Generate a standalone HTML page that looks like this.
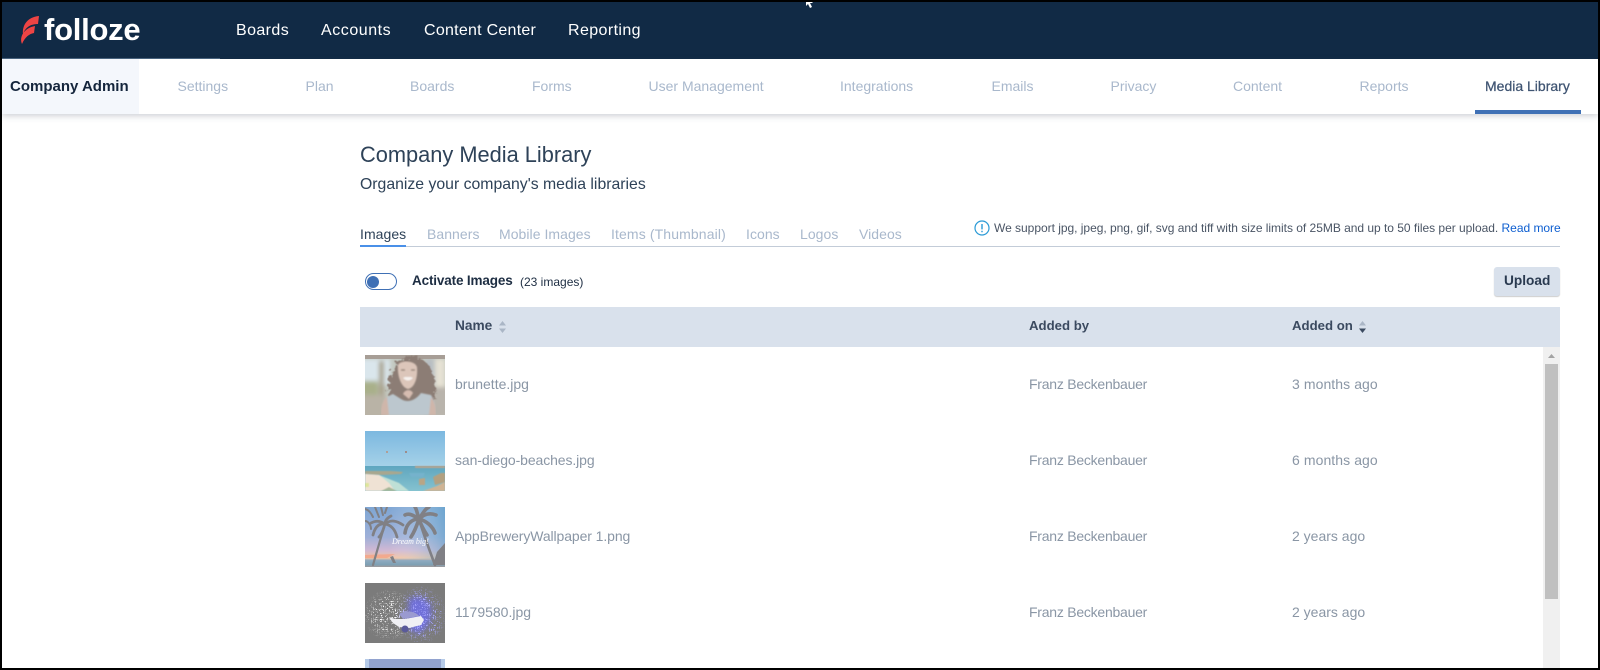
<!DOCTYPE html>
<html><head><meta charset="utf-8"><title>Company Media Library</title>
<style>
html,body{margin:0;padding:0;background:#fff}
body{width:1600px;height:670px;overflow:hidden;position:relative;font-family:"Liberation Sans",sans-serif}
.t{position:absolute;white-space:nowrap;line-height:20px;height:20px}
.bx{position:absolute}
.nav{color:#fff;font-size:16px;top:21px;letter-spacing:.4px}
.tab{color:#a9b8cc;font-size:14px;top:76px}
.sub{color:#a9b8cc;font-size:14px;top:224px;letter-spacing:.05px}
.th{color:#3b4a60;font-size:13.2px;font-weight:bold;top:316px}
.c{color:#8a96a5;font-size:14px}
.f{letter-spacing:-.1px}.b{letter-spacing:-.24px}.d{letter-spacing:.08px}
svg{position:absolute;display:block}
</style></head><body>
<div class="bx" style="left:2px;top:2px;width:1596px;height:57px;background:#112a45"></div>
<div class="bx" style="left:2px;top:58px;width:218px;height:1px;background:#4a6580"></div>
<svg style="left:18px;top:14px" width="24" height="32" viewBox="0 0 24 32"><path d="M21 2 L20 10 C14 10 8 12 5 20 C4 12 9 3 21 2Z M17 12 L16 19 C11 20 7 23 4 30 C1 23 6 14 17 12Z" fill="#ee4444"/></svg>
<div class="t" style="left:44px;top:10px;height:40px;line-height:40px;font-size:31px;font-weight:bold;color:#fff;letter-spacing:-.25px">folloze</div>
<div class="t nav" style="left:236px">Boards</div>
<div class="t nav" style="left:321px;letter-spacing:.55px">Accounts</div>
<div class="t nav" style="left:424px;letter-spacing:.26px">Content Center</div>
<div class="t nav" style="left:568px">Reporting</div>
<svg style="left:805px;top:0" width="12" height="10" viewBox="0 0 12 10"><path d="M1 0 L1 6 L3 4 L5 8 L7 7 L5 3 L8 3 L5 0Z" fill="#fff"/></svg>

<div class="bx" style="left:2px;top:59px;width:1596px;height:55px;background:#fff;box-shadow:0 2px 6px rgba(60,70,90,.25)"></div>
<div class="bx" style="left:2px;top:59px;width:137px;height:55px;background:#f4f7fc"></div>
<div class="t" style="left:10px;top:77px;font-size:15px;font-weight:bold;color:#14253c">Company Admin</div>
<div class="t tab" style="left:177.5px">Settings</div>
<div class="t tab" style="left:305.5px">Plan</div>
<div class="t tab" style="left:410px">Boards</div>
<div class="t tab" style="left:532px">Forms</div>
<div class="t tab" style="left:648.5px">User Management</div>
<div class="t tab" style="left:840px">Integrations</div>
<div class="t tab" style="left:991.5px">Emails</div>
<div class="t tab" style="left:1110.5px">Privacy</div>
<div class="t tab" style="left:1233px">Content</div>
<div class="t tab" style="left:1359.5px">Reports</div>
<div class="t tab" style="left:1485px;color:#3f5472;-webkit-text-stroke:.25px #3f5472">Media Library</div>
<div class="bx" style="left:1475px;top:110px;width:106px;height:4px;background:#3f70b5"></div>

<div class="t" style="left:360px;top:143px;height:24px;line-height:24px;font-size:21.8px;color:#2e4258">Company Media Library</div>
<div class="t" style="left:360px;top:175px;font-size:15.8px;color:#2e4258">Organize your company's media libraries</div>

<div class="t sub" style="left:360px;color:#2e4258">Images</div>
<div class="t sub" style="left:427px">Banners</div>
<div class="t sub" style="left:499px">Mobile Images</div>
<div class="t sub" style="left:611px;letter-spacing:.12px">Items (Thumbnail)</div>
<div class="t sub" style="left:746px">Icons</div>
<div class="t sub" style="left:800px">Logos</div>
<div class="t sub" style="left:859px">Videos</div>
<div class="bx" style="left:360px;top:246px;width:1200px;height:1px;background:#c3ccd8"></div>
<div class="bx" style="left:360px;top:245px;width:46px;height:2px;background:#4a90e8"></div>

<svg style="left:974px;top:220px" width="16" height="16" viewBox="0 0 16 16"><circle cx="8" cy="8" r="7" fill="none" stroke="#2a9ad6" stroke-width="1.2"/><path d="M8 4V9.4M8 10.8V12.2" stroke="#2a9ad6" stroke-width="1.4"/></svg>
<div class="t" style="left:994px;top:218px;font-size:12px;color:#4a5565;letter-spacing:-.023px">We support jpg, jpeg, png, gif, svg and tiff with size limits of 25MB and up to 50 files per upload. <span style="color:#0d5ed0">Read more</span></div>

<div class="bx" style="left:365px;top:273px;width:30px;height:15px;border:1.5px solid #3f70b5;border-radius:9px"></div>
<div class="bx" style="left:367px;top:276px;width:12px;height:12px;border-radius:50%;background:#3f70b5"></div>
<div class="t" style="left:412px;top:271px;font-size:13.5px;letter-spacing:-.15px;font-weight:bold;color:#1d2d42">Activate Images</div>
<div class="t" style="left:520px;top:272px;font-size:12px;color:#1d2d42">(23 images)</div>
<div class="bx" style="left:1494px;top:267px;width:66px;height:29px;background:#d9e1ec;border-radius:3px;box-shadow:0 1px 1px rgba(0,0,0,.2)"></div>
<div class="t" style="left:1504px;top:271px;font-size:13.7px;font-weight:bold;color:#2a3a50">Upload</div>

<div class="bx" style="left:360px;top:307px;width:1200px;height:40px;background:#d9e1ec"></div>
<div class="t th" style="left:455px;font-size:13.7px">Name</div>
<svg style="left:498px;top:321px" width="9" height="12" viewBox="0 0 9 12"><path d="M4.5 0L8 4.5H1ZM4.5 12L1 7.5H8Z" fill="#aab6c6"/></svg>
<div class="t th" style="left:1029px">Added by</div>
<div class="t th" style="left:1292px">Added on</div>
<svg style="left:1358px;top:321px" width="9" height="12" viewBox="0 0 9 12"><path d="M4.5 0L8 4.5H1Z" fill="#aab6c6"/><path d="M4.5 12L1 7.5H8Z" fill="#3b4a60"/></svg>

<!-- thumb 1 -->
<svg style="left:365px;top:355px" width="80" height="60" viewBox="0 0 80 60">
<defs><filter id="b1" x="-20%" y="-20%" width="140%" height="140%"><feGaussianBlur stdDeviation="2.2"/></filter>
<filter id="c1" x="-20%" y="-20%" width="140%" height="140%"><feTurbulence baseFrequency=".18" numOctaves="2" seed="7" result="n"/><feDisplacementMap in="SourceGraphic" in2="n" scale="9"/><feGaussianBlur stdDeviation=".5"/></filter>
<filter id="s1" x="0" y="0" width="100%" height="100%"><feGaussianBlur stdDeviation=".8"/></filter></defs>
<rect width="80" height="60" fill="#c3c8c0"/>
<g filter="url(#b1)"><rect x="-5" y="4" width="30" height="26" fill="#dae6ec"/><rect x="14" y="6" width="5" height="40" fill="#a8a08a"/><rect x="-5" y="26" width="18" height="14" fill="#a9b08a"/><rect x="-5" y="40" width="26" height="25" fill="#b9b3a6"/><rect x="60" y="4" width="12" height="26" fill="#b8bec2"/><rect x="70" y="4" width="10" height="30" fill="#e6e2d4"/><rect x="60" y="32" width="24" height="30" fill="#b9b4ac"/></g>
<rect width="80" height="4" fill="#a79e96"/>
<path d="M22 32C22 10 32 0 45 0C60 0 68 14 67 28C70 38 66 50 60 56L50 52H34L24 50C26 42 20 40 22 32Z" fill="#8c7d74" filter="url(#c1)"/>
<g filter="url(#s1)">
<path d="M16 60C16 48 20 42 28 39L36 44C42 48 50 46 56 38L66 40C70 46 71 54 71 60Z" fill="#bcc7ce"/>
<path d="M16 60C16 50 18 45 22 42L24 60ZM71 60C71 52 69 46 66 42L64 60Z" fill="#cfb6aa"/>
<path d="M33 10C35 5 50 5 52 12C53 24 49 33 43 34C37 33 32 22 33 10Z" fill="#dcc6ba"/>
<path d="M38 39C40 34 46 34 48 38L44 44Z" fill="#d6bcb0"/>
<path d="M38 23Q43 28 48 23L46 22H40Z" fill="#f7f3f0"/>
<path d="M36 15h4M46 15h4" stroke="#8d7a70" stroke-width="1.2"/>
</g>
</svg>
<!-- thumb 2 -->
<svg style="left:365px;top:431px" width="80" height="60" viewBox="0 0 80 60">
<defs><linearGradient id="s2" x1="0" y1="0" x2="0" y2="1"><stop offset="0" stop-color="#7cb8e0"/><stop offset="1" stop-color="#a6d2e8"/></linearGradient>
<linearGradient id="w2" x1="0" y1="0" x2="0" y2="1"><stop offset="0" stop-color="#5fa6bf"/><stop offset="1" stop-color="#85c2cf"/></linearGradient>
<filter id="b2"><feGaussianBlur stdDeviation=".6"/></filter></defs>
<rect width="80" height="36" fill="url(#s2)"/>
<rect y="35" width="80" height="25" fill="url(#w2)"/>
<g filter="url(#b2)">
<path d="M50 35H80V37H50Z" fill="#b8a590"/>
<path d="M0 40H26L38 41L36 43L18 44L0 43Z" fill="#a8a78f"/>
<path d="M14 44L34 52L44 60H20Z" fill="#bfe0d6"/>
<path d="M0 43L14 44L24 52L30 60H0Z" fill="#efe2d4"/>
<path d="M54 48L60 47L60 54L54 54Z" fill="#b9a585"/>
<path d="M68 46L76 42H80V51L70 54Z" fill="#b3a080"/>
<path d="M58 60L72 55L80 51V60Z" fill="#d0b494"/>
<path d="M44 42H60L58 46H46Z" fill="#74b2cc"/>
<path d="M16 60L24 56L32 60Z" fill="#a6b798"/>
<path d="M0 52H4V56H0Z" fill="#dfe59a"/>
</g>
<circle cx="22" cy="21" r="1" fill="#b9927e"/><circle cx="41" cy="21" r="1" fill="#a07a6e"/>
</svg>
<!-- thumb 3 -->
<svg style="left:365px;top:507px" width="80" height="60" viewBox="0 0 80 60">
<defs><linearGradient id="s3" x1="0" y1="0" x2="0" y2="1"><stop offset="0" stop-color="#7ea6d4"/><stop offset=".5" stop-color="#9eb0d8"/><stop offset=".72" stop-color="#d0b8d4"/><stop offset=".85" stop-color="#f2c4a4"/><stop offset=".89" stop-color="#8eaac0"/><stop offset=".96" stop-color="#7da0b4"/><stop offset="1" stop-color="#a09a9c"/></linearGradient>
<linearGradient id="r3" x1="0" x2="1"><stop offset=".3" stop-color="#fff" stop-opacity="0"/><stop offset="1" stop-color="#5fa4cc" stop-opacity=".55"/></linearGradient></defs>
<rect width="80" height="60" fill="url(#s3)"/>
<rect width="80" height="52" fill="url(#r3)"/>
<path d="M0 48L30 47L22 51L0 51Z" fill="#f5a080" opacity=".7"/>
<g fill="none" stroke="#808085" stroke-linecap="round">
<path d="M8 58C12 44 16 30 20 17" stroke-width="2.2"/>
<path d="M70 58C64 42 58 26 54 12" stroke-width="2.6"/>
<g stroke-width="2.8">
<path d="M20 17C14 16 10 20 8 28"/><path d="M20 17C14 13 10 14 6 16"/><path d="M20 17C26 12 32 14 38 18"/><path d="M20 17C26 18 30 22 32 30"/><path d="M20 17C18 22 18 26 14 30"/><path d="M20 17C20 14 22 11 26 9"/>
</g>
<g stroke-width="3.6">
<path d="M54 12C46 12 41 18 40 26"/><path d="M54 12C48 8 44 6 40 8"/><path d="M54 12C60 6 66 6 71 8"/><path d="M54 12C62 14 68 20 70 26"/><path d="M54 12C52 18 50 24 46 30"/><path d="M54 12C56 18 58 22 62 28"/><path d="M54 12C52 6 52 3 50 0"/><path d="M54 12C58 6 60 2 64 0"/>
</g>
<g stroke-width="2"><path d="M0 2C4 3 6 6 8 10"/><path d="M0 14C3 14 6 18 6 22"/><path d="M10 0L14 10"/><path d="M16 0L18 8"/><path d="M22 0L20 6"/></g>
</g>
<path d="M72 45L80 36V58H68Z" fill="#808085"/>
<path d="M25 50L28 49L31 56L28 56Z" fill="#808085"/>
<text x="27" y="37" font-family="Liberation Serif,serif" font-style="italic" font-size="8" fill="#fff">Dream big!</text>
</svg>
<!-- thumb 4 -->
<svg style="left:365px;top:583px" width="80" height="60" viewBox="0 0 80 60">
<defs><filter id="b4" x="-20%" y="-20%" width="140%" height="140%"><feGaussianBlur stdDeviation="3"/></filter>
<filter id="n4" x="0" y="0" width="100%" height="100%"><feTurbulence baseFrequency=".5" numOctaves="2" seed="4" result="t"/><feColorMatrix in="t" values="0 0 0 0 1 0 0 0 0 1 0 0 0 0 1 4 4 0 0 -2.4" result="m"/><feComposite in="SourceGraphic" in2="m" operator="in"/></filter>
<radialGradient id="g4"><stop offset=".45" stop-color="#fff"/><stop offset="1" stop-color="#fff" stop-opacity="0"/></radialGradient>
<radialGradient id="g5"><stop offset=".6" stop-color="#a8a8ff"/><stop offset="1" stop-color="#a8a8ff" stop-opacity="0"/></radialGradient></defs>
<rect width="80" height="60" fill="#7b7b7b"/>
<g filter="url(#b4)"><path d="M44 16C52 12 62 14 66 24C68 36 62 48 52 50C44 48 42 40 43 30Z" fill="#7070d8"/></g>
<ellipse cx="24" cy="32" rx="26" ry="26" fill="url(#g4)" filter="url(#n4)"/>
<ellipse cx="56" cy="32" rx="26" ry="30" fill="url(#g5)" filter="url(#n4)"/>
<path d="M24 34L30 36L40 36L56 33L59 37L56 42L44 45L34 44L28 40Z" fill="#f0f0f4"/>
<path d="M34 31C40 27 50 28 54 33L38 36Z" fill="#9a9ad0"/>
<circle cx="40" cy="46" r="3.5" fill="#5a5a9a"/>
</svg>
<!-- thumb 5 -->
<div class="bx" style="left:365px;top:659px;width:80px;height:9px;background:#b6cbe8"></div>
<div class="bx" style="left:369px;top:659px;width:72px;height:9px;background:#92a3cf"></div>

<div class="t c" style="left:455px;top:374px">brunette.jpg</div>
<div class="t c b" style="left:1029px;top:374px">Franz Beckenbauer</div>
<div class="t c d" style="left:1292px;top:374px">3 months ago</div>
<div class="t c f" style="left:455px;top:450px">san-diego-beaches.jpg</div>
<div class="t c b" style="left:1029px;top:450px">Franz Beckenbauer</div>
<div class="t c d" style="left:1292px;top:450px">6 months ago</div>
<div class="t c f" style="left:455px;top:526px">AppBreweryWallpaper 1.png</div>
<div class="t c b" style="left:1029px;top:526px">Franz Beckenbauer</div>
<div class="t c" style="left:1292px;top:526px">2 years ago</div>
<div class="t c" style="left:455px;top:602px">1179580.jpg</div>
<div class="t c b" style="left:1029px;top:602px">Franz Beckenbauer</div>
<div class="t c" style="left:1292px;top:602px">2 years ago</div>

<div class="bx" style="left:1543px;top:347px;width:17px;height:321px;background:#f0f0f0"></div>
<div class="bx" style="left:1545px;top:364px;width:13px;height:235px;background:#c0c0c0"></div>
<svg style="left:1547px;top:353px" width="9" height="6" viewBox="0 0 9 6"><path d="M4.5 1L8 5H1Z" fill="#a3a3a3"/></svg>

<div class="bx" style="left:0;top:0;width:1600px;height:670px;box-sizing:border-box;border:2px solid #000;pointer-events:none"></div>
</body></html>
